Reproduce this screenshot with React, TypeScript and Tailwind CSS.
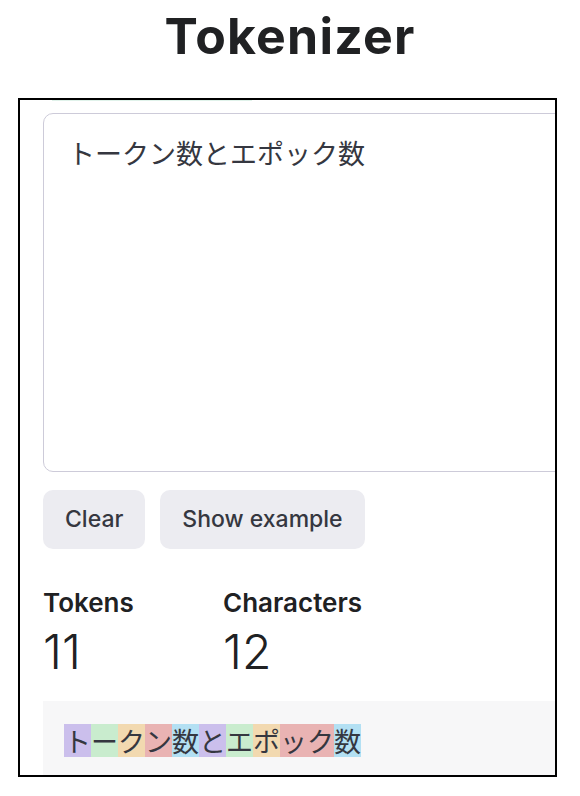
import React from "react";

const tokens: { t: string; c: string }[] = [
  { t: "ト", c: "bg-[#cbbfec]" },
  { t: "ー", c: "bg-[#c9ecce]" },
  { t: "ク", c: "bg-[#f2d9b0]" },
  { t: "ン", c: "bg-[#e9b3b3]" },
  { t: "数", c: "bg-[#b3e0f3]" },
  { t: "と", c: "bg-[#cbbfec]" },
  { t: "エ", c: "bg-[#c9ecce]" },
  { t: "ポ", c: "bg-[#f2d9b0]" },
  { t: "ック", c: "bg-[#e9b3b3]" },
  { t: "数", c: "bg-[#b3e0f3]" },
];

export default function App() {
  return (
    <div
      className="w-[580px] h-[796px] bg-white overflow-hidden"
      style={{ fontFamily: 'Inter, "Noto Sans CJK JP", sans-serif' }}
    >
      <h1 className="pt-[11px] text-center text-[50px] leading-[50px] font-bold text-[#202123] tracking-[1.2px]">
        Tokenizer
      </h1>
      <div className="ml-[18px] mt-[37px] w-[539px] h-[679px] border-2 border-black overflow-hidden">
        <div className="ml-[32px] w-[200px] h-px bg-[#e0f2ea]" />
        <div className="pl-[23px] w-[700px]">
          <div className="mt-[12px] h-[359px] w-[600px] border border-[#cdcbd9] rounded-[10px] pl-[24px] pt-[19px]">
            <div
              className="text-[27px] leading-[40px] text-[#353740]"
              style={{ fontFamily: '"Noto Sans CJK JP", sans-serif' }}
            >
              トークン数とエポック数
            </div>
          </div>
          <div className="mt-[18px] flex gap-[15px]">
            <button className="h-[59px] px-[22px] rounded-[10px] bg-[#ececf1] text-[23px] font-medium text-[#353740]">
              Clear
            </button>
            <button className="h-[59px] px-[22px] rounded-[10px] bg-[#ececf1] text-[23px] font-medium text-[#353740]">
              Show example
            </button>
          </div>
          <div className="mt-[39px] flex text-[#202123]">
            <div className="w-[180px]">
              <div className="text-[26px] leading-[30px] font-semibold">Tokens</div>
              <div className="mt-[6px] text-[48px] leading-[56px] font-light">11</div>
            </div>
            <div>
              <div className="text-[26px] leading-[30px] font-semibold">Characters</div>
              <div className="mt-[6px] text-[48px] leading-[56px] font-light">12</div>
            </div>
          </div>
          <div className="mt-[21px] h-[120px] w-[600px] bg-[#f7f7f8] pl-[21px] pt-[23px]">
            <div
              className="flex text-[27px] text-[#353740]"
              style={{ fontFamily: '"Noto Sans CJK JP", sans-serif' }}
            >
              {tokens.map((tk, i) => (
                <span key={i} className={`inline-block h-[33px] leading-[33px] ${tk.c}`}>
                  {tk.t}
                </span>
              ))}
            </div>
          </div>
        </div>
      </div>
    </div>
  );
}
